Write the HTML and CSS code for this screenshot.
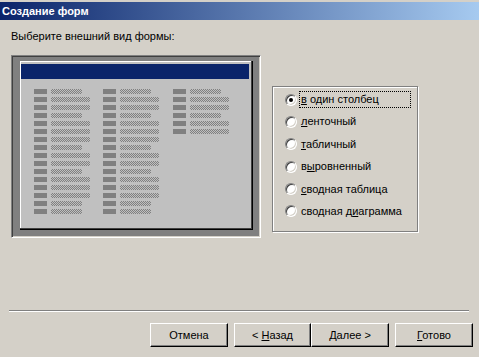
FILE: index.html
```html
<!DOCTYPE html>
<html lang="ru">

<head>
    <meta charset="UTF-8">
    <title>Создание форм</title>
    <link rel="stylesheet" href="styles.css">
</head>

<body>

    <div class="titlebar">Создание форм</div>

    <p class="prompt">Выберите внешний вид формы:</p>

    <div class="main">
        <div class="preview">
            <svg width="233" height="169" viewBox="0 0 233 169" shape-rendering="crispEdges">
                <defs>
                    <pattern id="dots" width="2" height="2" patternUnits="userSpaceOnUse">
                        <rect width="2" height="2" fill="#c0c0c0"/>
                        <rect width="1" height="1" fill="#808080"/>
                        <rect x="1" y="1" width="1" height="1" fill="#808080"/>
                    </pattern>
                    <g id="top6">
                        <rect x="14" y="28" width="13" height="5"/><rect x="31" y="28" width="31" height="5" fill="url(#dots)"/>
                        <rect x="14" y="36" width="13" height="5"/><rect x="31" y="36" width="39" height="5" fill="url(#dots)"/>
                        <rect x="14" y="44" width="13" height="5"/><rect x="31" y="44" width="39" height="5" fill="url(#dots)"/>
                        <rect x="14" y="52" width="13" height="5"/><rect x="31" y="52" width="31" height="5" fill="url(#dots)"/>
                        <rect x="14" y="60" width="13" height="5"/><rect x="31" y="60" width="39" height="5" fill="url(#dots)"/>
                        <rect x="14" y="68" width="13" height="5"/><rect x="31" y="68" width="39" height="5" fill="url(#dots)"/>
                    </g>
                    <g id="col">
                        <use href="#top6"/>
                        <rect x="14" y="76" width="13" height="5"/><rect x="31" y="76" width="39" height="5" fill="url(#dots)"/>
                        <rect x="14" y="84" width="13" height="5"/><rect x="31" y="84" width="31" height="5" fill="url(#dots)"/>
                        <rect x="14" y="92" width="13" height="5"/><rect x="31" y="92" width="39" height="5" fill="url(#dots)"/>
                        <rect x="14" y="100" width="13" height="5"/><rect x="31" y="100" width="39" height="5" fill="url(#dots)"/>
                        <rect x="14" y="108" width="13" height="5"/><rect x="31" y="108" width="31" height="5" fill="url(#dots)"/>
                        <rect x="14" y="116" width="13" height="5"/><rect x="31" y="116" width="39" height="5" fill="url(#dots)"/>
                        <rect x="14" y="124" width="13" height="5"/><rect x="31" y="124" width="39" height="5" fill="url(#dots)"/>
                        <rect x="14" y="132" width="13" height="5"/><rect x="31" y="132" width="39" height="5" fill="url(#dots)"/>
                        <rect x="14" y="140" width="13" height="5"/><rect x="31" y="140" width="31" height="5" fill="url(#dots)"/>
                        <rect x="14" y="148" width="13" height="5"/><rect x="31" y="148" width="31" height="5" fill="url(#dots)"/>
                    </g>
                </defs>
                <rect width="233" height="169" fill="#000"/>
                <rect width="232" height="168" fill="#404040"/>
                <rect width="231" height="167" fill="#fff"/>
                <rect x="1" y="1" width="230" height="166" fill="#c0c0c0"/>
                <rect x="1" y="3" width="228" height="15" fill="#0a246a"/>
                <g fill="#808080">
                    <use href="#col"/>
                    <use href="#col" x="69"/>
                    <use href="#top6" x="139"/>
                </g>
            </svg>
        </div>

        <div class="group">
            <label class="opt"><span class="radio on"></span><span class="text focus"><u>в</u> один столбец</span></label>
            <label class="opt"><span class="radio"></span><span class="text"><u>л</u>енточный</span></label>
            <label class="opt"><span class="radio"></span><span class="text"><u>т</u>абличный</span></label>
            <label class="opt"><span class="radio"></span><span class="text">в<u>ы</u>ровненный</span></label>
            <label class="opt"><span class="radio"></span><span class="text"><u>с</u>водная таблица</span></label>
            <label class="opt"><span class="radio"></span><span class="text">сводная д<u>и</u>аграмма</span></label>
        </div>
    </div>

    <hr class="sep">

    <div class="buttons">
        <button class="cancel">Отмена</button>
        <button class="back">&lt; <u>Н</u>азад</button>
        <button class="next"><u>Д</u>алее &gt;</button>
        <button class="finish"><u>Г</u>отово</button>
    </div>

</body>

</html>
```

FILE: styles.css
```css
*{
    margin: 0;
    padding: 0;
    box-sizing: border-box;
}
body{
    width: 479px;
    height: 357px;
    overflow: hidden;
    background: #d4d0c8;
    font-family: "Liberation Sans", Arial, sans-serif;
    font-size: 11px;
    color: #000;
}
.titlebar{
    margin-top: 2px;
    height: 18px;
    line-height: 18px;
    padding-left: 2px;
    background: linear-gradient(to right, #0a246a, #a6caf0);
    color: #fff;
    font-weight: bold;
}
.prompt{
    margin: 10px 0 0 11px;
    height: 13px;
    line-height: 13px;
}
.main{
    display: flex;
    align-items: flex-start;
    margin: 12px 0 0 11px;
}
.preview{
    width: 250px;
    height: 183px;
    border: 1px solid;
    border-color: #808080 #fff #fff #808080;
    box-shadow: inset 1px 1px #404040, inset -1px -1px #d4d0c8;
    background: #808080;
    padding: 5px 0 0 8px;
}
.preview svg{
    display: block;
}
.group{
    width: 146px;
    height: 146px;
    margin: 31px 0 0 11px;
    border: 1px solid #808080;
    box-shadow: inset 1px 1px #fff, 1px 1px #fff;
    padding: 4px 0 0 12px;
    display: grid;
    grid-auto-rows: 17px;
    row-gap: 5.4px;
    align-content: start;
}
.opt{
    display: flex;
    align-items: center;
}
.radio{
    position: relative;
    width: 12px;
    height: 12px;
    margin-right: 2px;
    border-radius: 50%;
    background: #fff;
    border: 1px solid;
    border-color: #808080 #fff #fff #808080;
    box-shadow: inset 1px 1px #404040, inset -1px -1px #d4d0c8;
}
.radio.on::after{
    content: "";
    position: absolute;
    left: 3px;
    top: 3px;
    width: 4px;
    height: 4px;
    border-radius: 50%;
    background: #000;
}
.text{
    display: block;
    width: 112px;
    height: 17px;
    line-height: 15px;
    padding-left: 1px;
    white-space: nowrap;
    border: 1px dotted transparent;
}
.text.focus{
    border-color: #000;
}
.sep{
    width: 460px;
    height: 2px;
    margin: 72px 0 0 9px;
    border: 0;
    border-top: 1px solid #808080;
    border-bottom: 1px solid #fff;
}
.buttons{
    display: flex;
    justify-content: flex-end;
    margin-top: 11px;
    padding-right: 6px;
}
button{
    width: 78px;
    height: 24px;
    font: inherit;
    color: #000;
    background: #d4d0c8;
    border: 1px solid;
    border-color: #fff #000 #000 #fff;
    box-shadow: inset -1px -1px #808080;
}
.cancel{
    margin-right: 6px;
}
.back{
    width: 77px;
}
.finish{
    margin-left: 6px;
}
```
